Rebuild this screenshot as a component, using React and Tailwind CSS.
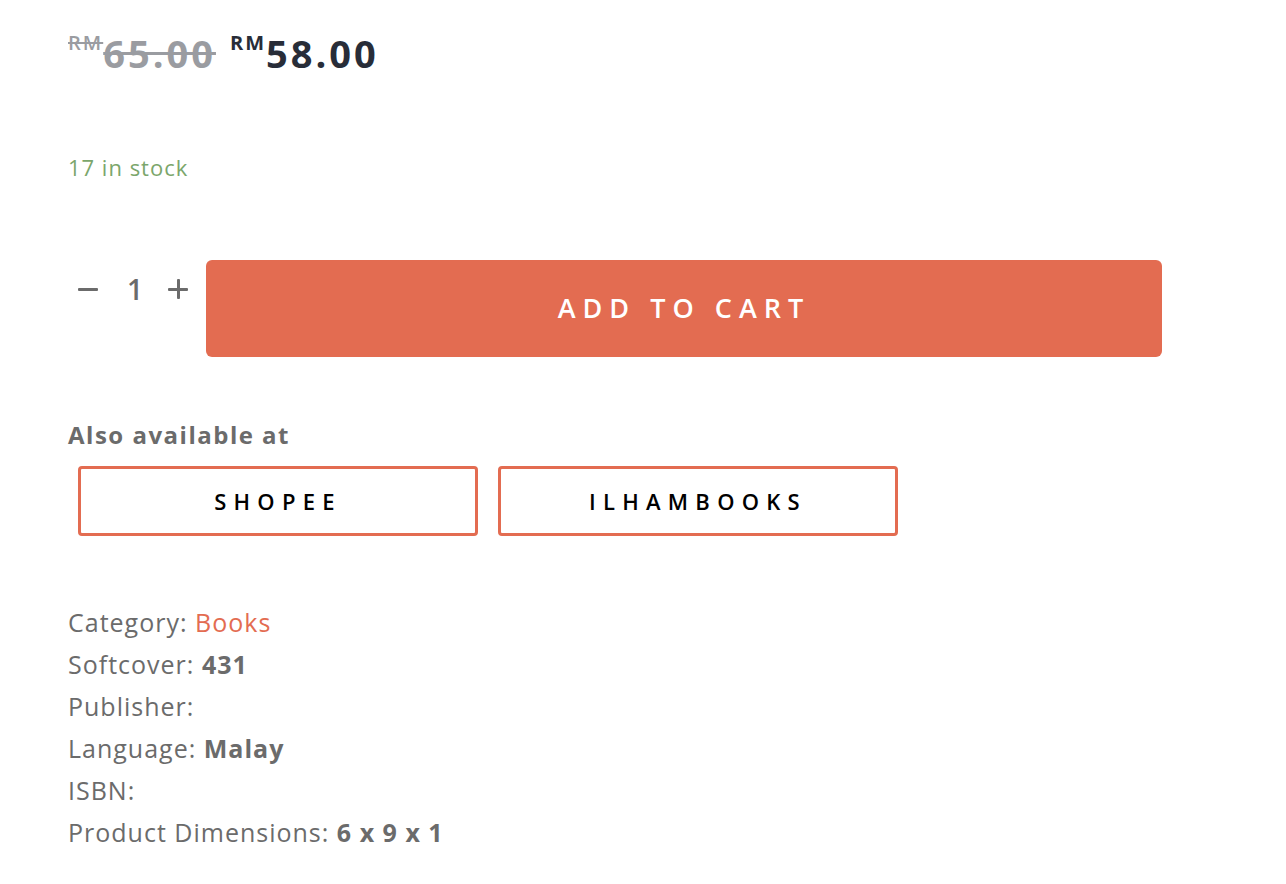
export default function App() {
  const meta = [
    { label: 'Category:', value: 'Books', link: true },
    { label: 'Softcover:', value: '431' },
    { label: 'Publisher:', value: '' },
    { label: 'Language:', value: 'Malay' },
    { label: 'ISBN:', value: '' },
    { label: 'Product Dimensions:', value: '6 x 9 x 1' },
  ]

  return (
    <div className="min-h-[884px] w-[1286px] bg-white pl-[68px] text-[#6b6b6b]" style={{ fontFamily: '"Open Sans", sans-serif' }}>
      <div className="flex items-start pt-[30px] gap-[14px]">
        <div className="flex items-start text-[#9a9ca1]">
          <span className="text-[20px] font-semibold leading-none mt-[3px] tracking-[2px] line-through">RM</span>
          <span className="text-[38px] font-bold leading-none mt-[4px] tracking-[3px] line-through">65.00</span>
        </div>
        <div className="flex items-start text-[#282d38]">
          <span className="text-[20px] font-bold leading-none mt-[3px] tracking-[2px]">RM</span>
          <span className="text-[38px] font-bold leading-none mt-[4px] tracking-[3px]">58.00</span>
        </div>
      </div>

      <p className="mt-[84px] text-[22px] text-[#7ba66b] leading-none tracking-[1px]">17 in stock</p>

      <div className="mt-[82px] flex items-start">
        <div className="flex items-center h-[58px] w-[138px] text-[28px] text-[#6b6b6b]">
          <span className="ml-[10px] h-[3px] w-[20px] rounded-[1px] bg-[#6b6b6b]" />
          <span className="ml-[29px] w-[10px] text-center font-semibold leading-none">1</span>
          <span className="relative ml-[31px] h-[20px] w-[20px]">
            <span className="absolute left-0 top-[8.5px] h-[3px] w-[20px] rounded-[1px] bg-[#6b6b6b]" />
            <span className="absolute left-[8.5px] top-0 h-[20px] w-[3px] rounded-[1px] bg-[#6b6b6b]" />
          </span>
        </div>
        <button className="h-[97px] w-[956px] rounded-[6px] bg-[#e36c51] text-[27px] font-semibold tracking-[0.26em] text-white">
          ADD TO CART
        </button>
      </div>

      <p className="mt-[66px] text-[24px] font-bold leading-none tracking-[1.5px]">Also available at</p>

      <div className="mt-[19px] ml-[10px] flex gap-[20px]">
        <div className="flex h-[70px] w-[400px] items-center justify-center rounded-[4px] border-[3px] border-[#e36c51] text-[22px] font-semibold tracking-[0.33em] text-black">
          SHOPEE
        </div>
        <div className="flex h-[70px] w-[400px] items-center justify-center rounded-[4px] border-[3px] border-[#e36c51] text-[22px] font-semibold tracking-[0.33em] text-black">
          ILHAMBOOKS
        </div>
      </div>

      <div className="mt-[65px] flex flex-col text-[25px] leading-[42px] tracking-[1px]">
        {meta.map((m) => (
          <div key={m.label}>
            {m.label}{' '}
            {m.value &&
              (m.link ? (
                <span className="text-[#e36c51]">{m.value}</span>
              ) : (
                <span className="font-bold">{m.value}</span>
              ))}
          </div>
        ))}
      </div>
    </div>
  )
}
